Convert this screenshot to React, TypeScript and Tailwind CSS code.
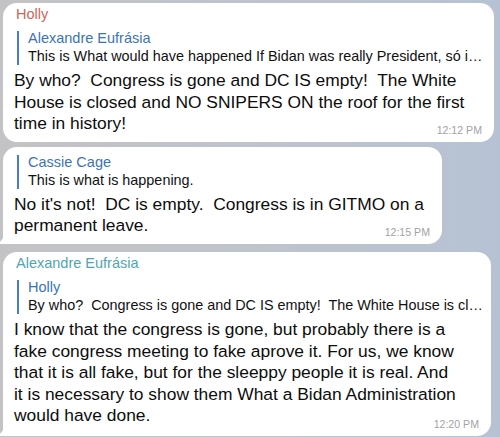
import React from 'react';

type Reply = { name: string; text: string };

type Msg = {
    sender?: string;
    senderColor?: string;
    reply: Reply;
    lines: string[];
    time: string;
    width: string;
    tail?: boolean;
    pb?: string;
};

const messages: Msg[] = [
    {
        sender: 'Holly',
        senderColor: 'text-[#c9685a]',
        reply: {
            name: 'Alexandre Eufrásia',
            text: 'This is What would have happened If Bidan was really President, só i…',
        },
        lines: [
            'By who?  Congress is gone and DC IS empty!  The White',
            'House is closed and NO SNIPERS ON the roof for the first',
            'time in history!',
        ],
        time: '12:12 PM',
        width: 'w-[491px]',
    },
    {
        reply: { name: 'Cassie Cage', text: 'This is what is happening.' },
        lines: [
            "No it's not!  DC is empty.  Congress is in GITMO on a",
            'permanent leave.',
        ],
        time: '12:15 PM',
        width: 'w-[439px]',
        tail: true,
    },
    {
        sender: 'Alexandre Eufrásia',
        senderColor: 'text-[#4fa6b1]',
        reply: {
            name: 'Holly',
            text: 'By who?  Congress is gone and DC IS empty!  The White House is cl…',
        },
        lines: [
            'I know that the congress is gone, but probably there is a',
            'fake congress meeting to fake aprove it. For us, we know',
            'that it is all fake, but for the sleeppy people it is real. And',
            'it is necessary to show them What a Bidan Administration',
            'would have done.',
        ],
        time: '12:20 PM',
        width: 'w-[488px]',
        tail: true,
        pb: 'pb-[9px]',
    },
];

// little telegram style tail at the bottom left corner
const Tail = () => (
    <svg
        className="absolute -left-[5px] bottom-0"
        width="14"
        height="18"
        viewBox="0 0 14 18"
    >
        <path d="M14 0 L14 18 L3 18 C1 18 0 17.5 0 17 C4 15 6 12 6 6 L6 0 Z" fill="#ffffff" />
    </svg>
);

const Bubble = ({ msg, className = '' }: { msg: Msg; className?: string }) => (
    <div className={`relative ${msg.width} ${className} bg-white rounded-[14px] ${msg.tail ? 'rounded-bl-[4px]' : ''} ${msg.sender ? 'pt-[3px]' : 'pt-[8px]'} ${msg.pb ?? 'pb-[7px]'} pl-[11px] pr-[13px]`}>
        {msg.tail && <Tail />}
        {msg.sender && (
            <div className={`pl-[2px] text-[14.5px] leading-[17px] ${msg.senderColor}`}>{msg.sender}</div>
        )}
        <div className={`${msg.sender ? 'mt-[8px]' : ''} ml-[3px] border-l-[2.5px] border-[#4a7dbd] pl-[9px]`}>
            <div className="text-[14.5px] leading-[14px] text-[#3b74b4]">{msg.reply.name}</div>
            <div className="mt-[2px] text-[14.4px] leading-[18px] text-[#111] whitespace-pre">{msg.reply.text}</div>
        </div>
        <div className="mt-[5px] text-[17.4px] leading-[21.6px] text-[#0d0d0d] whitespace-pre">
            {msg.lines.map((l, i) => (
                <div key={i}>{l}</div>
            ))}
        </div>
        <div className="absolute right-[12px] bottom-[6px] text-[10.6px] leading-[12px] text-[#a2a2a6]">
            {msg.time}
        </div>
    </div>
);

export default function App() {
    return (
        <div
            className="w-[500px] h-[437px] overflow-hidden bg-gradient-to-r from-[#c3c3c5] via-[#bfc3cb] to-[#b6c2d4] flex flex-col gap-[5px] pt-[3px] pl-[3px]"
            style={{ fontFamily: '"Liberation Sans", Arial, sans-serif' }}
        >
            <Bubble msg={messages[0]} />
            <Bubble msg={messages[1]} />
            <Bubble msg={messages[2]} className="mt-[3px]" />
        </div>
    );
}
